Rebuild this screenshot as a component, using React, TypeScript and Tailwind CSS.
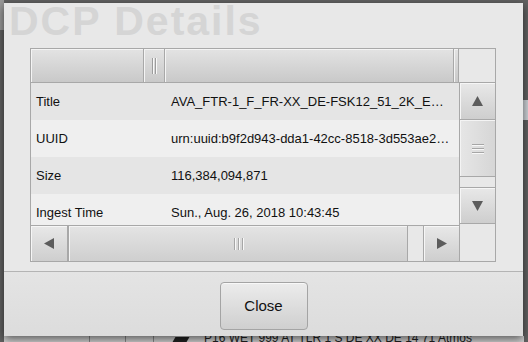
import type { ReactNode } from 'react';

type Dir = 'up' | 'down' | 'left' | 'right';

const rows = [
  { label: 'Title', value: 'AVA_FTR-1_F_FR-XX_DE-FSK12_51_2K_EN_20180820_XDC_SMPTE_OV' },
  { label: 'UUID', value: 'urn:uuid:b9f2d943-dda1-42cc-8518-3d553ae2c1f0' },
  { label: 'Size', value: '116,384,094,871' },
  { label: 'Ingest Time', value: 'Sun., Aug. 26, 2018 10:43:45' }
];

function Arrow({ dir }: { dir: Dir }) {
  const vertical = dir === 'up' || dir === 'down';
  const w = vertical ? 11 : 10;
  const h = vertical ? 10 : 11;
  const points = {
    up: '5.5,0 11,10 0,10',
    down: '0,0 11,0 5.5,10',
    left: '0,5.5 10,0 10,11',
    right: '0,0 10,5.5 0,11'
  }[dir];
  return (
    <svg width={w} height={h} viewBox={`0 0 ${w} ${h}`}>
      <polygon points={points} fill="#5c5c5c" />
    </svg>
  );
}

function ScrollButton({ dir, className }: { dir: Dir; className: string }) {
  return (
    <div
      className={`flex items-center justify-center border-[#a8a8a8] bg-linear-to-b from-[#e8e8e8] to-[#cecece] shadow-[inset_1px_1px_0_#f6f6f6] ${className}`}
    >
      <Arrow dir={dir} />
    </div>
  );
}

function HeaderCell({ className, children }: { className: string; children?: ReactNode }) {
  return (
    <div
      className={`flex h-full items-center justify-center border-r border-[#a8a8a8] bg-linear-to-b from-[#e3e3e3] to-[#c9c9c9] shadow-[inset_1px_1px_0_#f4f4f4] ${className}`}
    >
      {children}
    </div>
  );
}

export default function App() {
  return (
    <div className="relative h-[342px] w-[528px] overflow-hidden bg-[#626262] font-['Liberation_Sans',Arial,sans-serif]">
      {/* what shows of the app behind the dialog */}
      <div className="absolute left-0 top-0 h-[30px] w-[4px] bg-[#9a9a9a]" />
      <div className="absolute bottom-0 left-[4px] flex h-[6px] w-[520px] items-start overflow-hidden bg-[#d2d2d2] text-[12px] leading-[12px] text-[#222]">
        <div className="h-full w-[86px] border-r border-[#8a8a8a]" />
        <div className="h-full w-[36px] border-r border-[#8a8a8a]" />
        <div className="h-full w-[28px] border-r border-[#8a8a8a]" />
        <div className="ml-[20px] mt-[1px] h-[5px] w-[14px] -skew-x-[30deg] bg-[#222]" />
        <span className="-mt-[4px] ml-[16px] whitespace-nowrap">P16 WET 999 AT TLR 1 S DE XX DE 14 71 Atmos</span>
      </div>
      <div className="absolute right-0 top-[100px] h-[20px] w-[5px] bg-[#cfd3d8]" />

      <div className="absolute left-[4px] top-[3px] flex h-[333px] w-[519px] flex-col bg-[#e8e8e8] shadow-[0_3px_9px_rgba(0,0,0,0.6)]">
        <h1 className="-mt-[5px] h-[50px] pl-[5px] text-[41px] font-bold leading-[46px] tracking-[2px] text-[#d5d5d5]">DCP Details</h1>

        <div className="ml-[26px] flex h-[214px] w-[466px] border border-[#a8a8a8] bg-[#e8e8e8] text-[13px] text-[#111]">
          <div className="flex w-[428px] flex-col">
            <div className="flex h-[34px] border-b border-[#a8a8a8]">
              <HeaderCell className="w-[113px]" />
              <HeaderCell className="w-[21px] gap-[2px]">
                <span className="h-[16px] w-[1px] bg-[#9c9c9c] shadow-[1px_0_0_#f8f8f8]" />
                <span className="h-[16px] w-[1px] bg-[#9c9c9c] shadow-[1px_0_0_#f8f8f8]" />
              </HeaderCell>
              <HeaderCell className="w-[289px]" />
              <HeaderCell className="w-[5px]" />
            </div>

            <div className="flex-1 overflow-hidden">
              {rows.map((row, i) => (
                <div
                  key={row.label}
                  className={`flex h-[37px] items-center ${i % 2 === 0 ? 'bg-[#e5e5e5]' : 'bg-[#efefef]'}`}
                >
                  <span className="w-[134px] shrink-0 pl-[5px]">{row.label}</span>
                  <span className="min-w-0 flex-1 truncate pl-[6px] pr-[6px]">{row.value}</span>
                </div>
              ))}
            </div>

            <div className="flex h-[36px] border-t border-[#a8a8a8]">
              <ScrollButton dir="left" className="w-[37px] border-r" />
              <div className="flex w-[340px] items-center justify-center gap-[3px] border-x border-[#a8a8a8] bg-linear-to-b from-[#e4e4e4] to-[#cfcfcf] shadow-[inset_1px_1px_0_#f4f4f4]">
                <span className="h-[12px] w-[1px] bg-[#a6a6a6] shadow-[1px_0_0_#f8f8f8]" />
                <span className="h-[12px] w-[1px] bg-[#a6a6a6] shadow-[1px_0_0_#f8f8f8]" />
                <span className="h-[12px] w-[1px] bg-[#a6a6a6] shadow-[1px_0_0_#f8f8f8]" />
              </div>
              <div className="w-[15px]" />
              <ScrollButton dir="right" className="w-[36px] border-l" />
            </div>
          </div>

          <div className="flex w-[36px] flex-col">
            <div className="h-[33px]" />
            <div className="flex flex-1 flex-col border-l border-t border-[#a8a8a8]">
              <ScrollButton dir="up" className="h-[37px] border-b" />
              <div className="flex h-[57px] flex-col items-center justify-center gap-[3px] border-b border-[#a8a8a8] bg-linear-to-r from-[#e6e6e6] to-[#d6d6d6] shadow-[inset_1px_1px_0_#f4f4f4]">
                <span className="h-[1px] w-[12px] bg-[#a6a6a6] shadow-[0_1px_0_#f8f8f8]" />
                <span className="h-[1px] w-[12px] bg-[#a6a6a6] shadow-[0_1px_0_#f8f8f8]" />
                <span className="h-[1px] w-[12px] bg-[#a6a6a6] shadow-[0_1px_0_#f8f8f8]" />
              </div>
              <div className="h-[10px]" />
              <ScrollButton dir="down" className="h-[37px] border-y" />
              <div className="flex-1" />
            </div>
          </div>
        </div>

        <div className="mt-[9px] flex flex-1 justify-center border-t border-[#b4b4b4] bg-linear-to-b from-[#e4e4e4] to-[#dcdcdc] pt-[10px]">
          <button
            type="button"
            className="h-[48px] w-[88px] rounded-[4px] border border-[#a4a4a4] bg-linear-to-b from-[#ececec] to-[#cfcfcf] text-[15px] text-[#111] shadow-[inset_0_1px_0_#f8f8f8]"
          >
            Close
          </button>
        </div>
      </div>
    </div>
  );
}
